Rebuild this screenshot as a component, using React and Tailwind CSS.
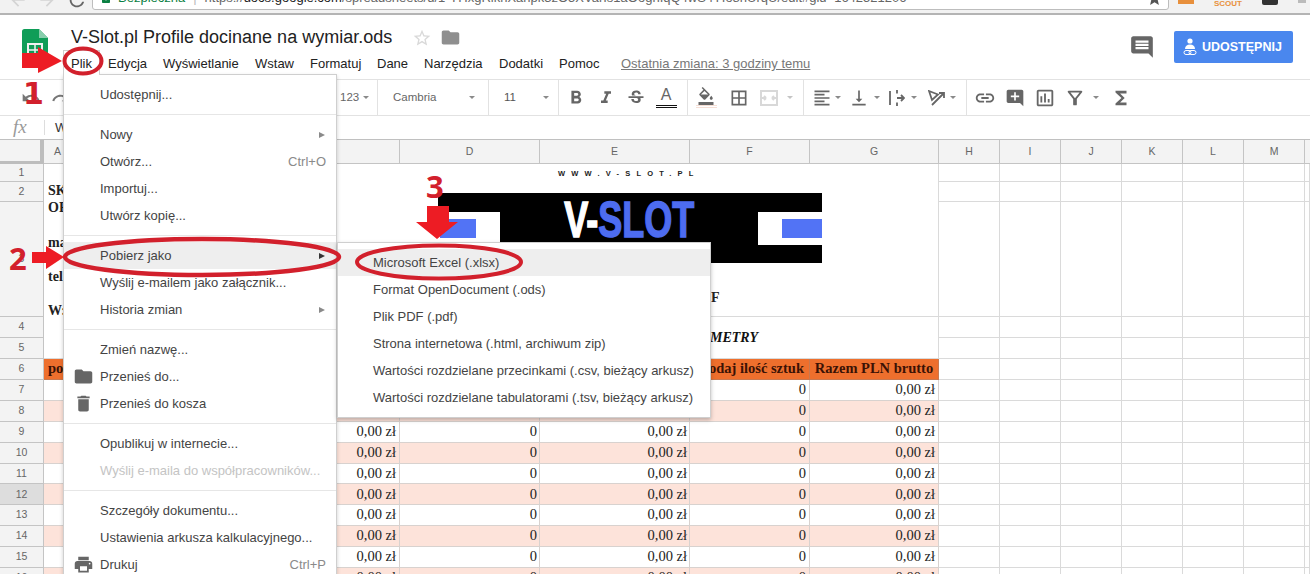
import React from 'react';
import {
  MdComment, MdStarBorder, MdFolder, MdDelete, MdPrint, MdFormatBold, MdFormatItalic, MdStrikethroughS,
  MdFormatColorFill, MdBorderAll, MdFormatAlignLeft, MdVerticalAlignBottom, MdLink, MdAddComment,
  MdOutlineInsertChart, MdOutlineFilterAlt, MdFunctions, MdUndo, MdRedo, MdLock, MdRefresh, MdStar, MdArrowBack, MdArrowForward,
} from 'react-icons/md';

const sansFont = "font-['Liberation_Sans',Arial,sans-serif]";
const serifFont = "font-['Liberation_Serif','Times_New_Roman',serif]";

const fileMenu = [
  { label: 'Udostępnij...' },
  { divider: true },
  { label: 'Nowy', arrow: true },
  { label: 'Otwórz...', hint: 'Ctrl+O' },
  { label: 'Importuj...' },
  { label: 'Utwórz kopię...' },
  { divider: true },
  { label: 'Pobierz jako', arrow: true, active: true },
  { label: 'Wyślij e-mailem jako załącznik...' },
  { label: 'Historia zmian', arrow: true },
  { divider: true },
  { label: 'Zmień nazwę...' },
  { label: 'Przenieś do...', icon: MdFolder },
  { label: 'Przenieś do kosza', icon: MdDelete },
  { divider: true },
  { label: 'Opublikuj w internecie...' },
  { label: 'Wyślij e-maila do współpracowników...', disabled: true },
  { divider: true },
  { label: 'Szczegóły dokumentu...' },
  { label: 'Ustawienia arkusza kalkulacyjnego...' },
  { label: 'Drukuj', icon: MdPrint, hint: 'Ctrl+P' },
];

const downloadMenu = [
  'Microsoft Excel (.xlsx)',
  'Format OpenDocument (.ods)',
  'Plik PDF (.pdf)',
  'Strona internetowa (.html, archiwum zip)',
  'Wartości rozdzielane przecinkami (.csv, bieżący arkusz)',
  'Wartości rozdzielane tabulatorami (.tsv, bieżący arkusz)',
];

const columns = ['D', 'E', 'F', 'G'];
const emptyColumns = ['H', 'I', 'J', 'K', 'L', 'M', ''];
const dataRows = [7, 8, 9, 10, 11, 12, 13, 14, 15, 16];

function Caret({ className = '' }) {
  return <span className={`inline-block w-0 h-0 border-x-[3px] border-x-transparent border-t-[3px] border-t-[#8a8a8a] shrink-0 ${className}`} />;
}

function ToolIcon({ children, className = 'w-[30px]' }) {
  return <div className={`flex items-center justify-center text-[#666] shrink-0 ${className}`}>{children}</div>;
}

function Separator() {
  return <div className="w-px h-full bg-[#e2e2e2] shrink-0" />;
}

function BrowserBar() {
  return (
    <div className="h-[15px] bg-[#f2f2f2] border-b-2 border-[#b4b4b4] flex overflow-hidden shrink-0">
      <div className="w-[92px] shrink-0 flex items-end gap-[9px] pl-[8px] text-[#d4d4d4]">
        <MdArrowBack size={20} className="mb-[3px]" />
        <MdArrowForward size={20} className="mb-[3px]" />
        <MdRefresh size={22} className="mb-[2px] text-[#666]" />
      </div>
      <div className="w-[1077px] h-[24px] -mt-[14px] bg-white border border-[#bdbdbd] rounded-[3px] flex items-center pl-[7px] pr-[5px] text-[13px] whitespace-nowrap overflow-hidden">
        <MdLock size={12} className="text-[#0b8043] mr-[6px] shrink-0" />
        <span className="text-[#0b8043]">Bezpieczna</span>
        <span className="mx-[8px] text-[#bbb]">|</span>
        <span className="text-[#666]">https://</span>
        <span className="text-[#222]">docs.google.com</span>
        <span className="text-[#666] flex-1 overflow-hidden">/spreadsheets/d/1-YHxgRlkhXanpk3zO5XVarIs1aOoghIqQ4wS4YIo8hUrqU/edit#gid=1642521206</span>
        <MdStar size={17} className="text-[#555] shrink-0" />
      </div>
      <div className="flex-1 flex items-start pl-[9px] gap-[20px] text-[8px] leading-[8px]">
        <span className="w-[16px] h-[4px] bg-[#e8903c] mt-0" />
        <span className="text-[#e8903c] font-bold">SCOUT</span>
        <span className="w-[16px] h-[5px] bg-[#333] rounded-b-[2px]" />
        <span className="w-[8px] h-[3px] bg-[#bbb]" />
      </div>
    </div>
  );
}

function SheetsLogo() {
  return (
    <svg width="26" height="36" viewBox="0 0 26 36" className="shrink-0">
      <path d="M2.5 0H17l9 9v24.500a2.500 2.500 0 0 1-2.500 2.500h-21A2.500 2.500 0 0 1 0 33.500v-31A2.500 2.500 0 0 1 2.500 0z" fill="#0f9d58" />
      <path d="M17 0l9 9h-9z" fill="#87ceac" />
      <path d="M6 15h14v12H6z" fill="none" stroke="#f1f1f1" strokeWidth="2" />
      <path d="M6 21h14M13 15v12" stroke="#f1f1f1" strokeWidth="1.500" />
    </svg>
  );
}

function Header() {
  return (
    <div className="h-[64px] flex bg-white shrink-0">
      <div className="w-[71px] shrink-0 pl-[22px] pt-[14px]">
        <SheetsLogo />
      </div>
      <div className="flex-1 pt-[11px]">
        <div className="flex items-center h-[23px]">
          <h1 className="text-[18px] leading-[23px] text-[#222] font-normal whitespace-nowrap">V-Slot.pl Profile docinane na wymiar.ods</h1>
          <MdStarBorder size={20} className="ml-[20px] text-[#d9d9d9]" />
          <MdFolder size={21} className="ml-[8px] text-[#8f8f8f]" />
        </div>
        <div className="flex items-center h-[20px] mt-[5px] text-[13px] text-[#222] whitespace-nowrap">
          <span className="w-[37px]">Plik</span>
          <span className="w-[55px]">Edycja</span>
          <span className="w-[92px]">Wyświetlanie</span>
          <span className="w-[55px]">Wstaw</span>
          <span className="w-[67px]">Formatuj</span>
          <span className="w-[47px]">Dane</span>
          <span className="w-[75px]">Narzędzia</span>
          <span className="w-[60px]">Dodatki</span>
          <span className="w-[62px]">Pomoc</span>
          <span className="text-[#777] underline">Ostatnia zmiana: 3 godziny temu</span>
        </div>
      </div>
      <div className="flex items-start pt-[16px] pr-[17px]">
        <MdComment size={26} className="text-[#666] mt-[3px] mr-[19px]" />
        <button className="w-[119px] h-[32px] bg-[#4a87ee] rounded-[2px] flex items-center pl-[9px] gap-[5px] text-white text-[12.500px] font-bold whitespace-nowrap">
          <svg width="14" height="18" viewBox="0 0 14 18" fill="none">
            <circle cx="7" cy="3" r="2.600" fill="#fff" />
            <path d="M2 11c0-3 2-4.500 5-4.500s5 1.500 5 4.500z" fill="#fff" />
            <rect x="1" y="12.500" width="7" height="4" rx="2" stroke="#fff" />
            <rect x="6" y="12.500" width="7" height="4" rx="2" stroke="#fff" />
          </svg>
          UDOSTĘPNIJ
        </button>
      </div>
    </div>
  );
}

function Toolbar() {
  return (
    <div className="h-[37px] border-y border-[#e2e2e2] flex items-stretch bg-white shrink-0 text-[11.500px] text-[#666]">
      <div className="w-[336px] flex items-center pl-[21px] gap-[4px] text-[#777]">
        <MdUndo size={20} />
        <MdRedo size={20} className="ml-[6px]" />
      </div>
      <div className="w-[41px] flex items-center pl-[4px] gap-[4px]">123 <Caret /></div>
      <Separator />
      <div className="w-[110px] flex items-center pl-[15px] pr-[13px] justify-between">Cambria <Caret /></div>
      <Separator />
      <div className="w-[69px] flex items-center pl-[15px] pr-[9px] justify-between text-[#555]">11 <Caret /></div>
      <Separator />
      <div className="w-[128px] flex items-center pl-[2px]">
        <ToolIcon><MdFormatBold size={22} /></ToolIcon>
        <ToolIcon><MdFormatItalic size={20} /></ToolIcon>
        <ToolIcon><MdStrikethroughS size={20} /></ToolIcon>
        <ToolIcon>
          <div className="flex flex-col items-center">
            <span className="text-[16px] leading-[15px] text-[#666]">A</span>
            <span className="w-[21px] h-[3px] border-y border-[#111] mt-[3px]" />
          </div>
        </ToolIcon>
      </div>
      <Separator />
      <div className="w-[115px] flex items-center pl-[3px]">
        <ToolIcon>
          <div className="flex flex-col items-center">
            <MdFormatColorFill size={18} />
            <span className="w-[21px] h-[3px] border-y border-[#f6dfd6]" />
          </div>
        </ToolIcon>
        <ToolIcon className="w-[30px] ml-[3px]"><MdBorderAll size={20} /></ToolIcon>
        <ToolIcon>
          <svg width="18" height="16" viewBox="0 0 18 16" fill="none" stroke="#d8d8d8" strokeWidth="2">
            <path d="M1 1h16v14H1zM1 8h5M12 8h5M6 8l-2-2M6 8l-2 2M12 8l2-2M12 8l2 2" />
          </svg>
        </ToolIcon>
        <Caret className="ml-[3px] opacity-50" />
      </div>
      <Separator />
      <div className="w-[162px] flex items-center pl-[5px]">
        <ToolIcon className="w-[26px]"><MdFormatAlignLeft size={20} /></ToolIcon>
        <Caret />
        <ToolIcon className="w-[26px] ml-[5px]"><MdVerticalAlignBottom size={20} /></ToolIcon>
        <Caret className="ml-[2px]" />
        <ToolIcon className="w-[28px] ml-[3px]">
          <svg width="16" height="16" viewBox="0 0 16 16" fill="none" stroke="#666" strokeWidth="1.800">
            <path d="M1 1v14M8 0v3.500M8 12.500V16M8 8h7M12 5l3 3-3 3" />
          </svg>
        </ToolIcon>
        <Caret />
        <ToolIcon className="w-[27px] ml-[6px]">
          <svg width="18" height="16" viewBox="0 0 18 16" fill="none" stroke="#666" strokeWidth="1.800">
            <path d="M1 1l9 3.500-6 5.500zM4 15L16 3M11 3h5v5" />
          </svg>
        </ToolIcon>
        <Caret />
      </div>
      <Separator />
      <div className="flex-1 flex items-center pl-[3px]">
        <ToolIcon><MdLink size={22} /></ToolIcon>
        <ToolIcon><MdAddComment size={20} /></ToolIcon>
        <ToolIcon><MdOutlineInsertChart size={22} /></ToolIcon>
        <ToolIcon><MdOutlineFilterAlt size={22} /></ToolIcon>
        <Caret className="ml-[3px]" />
        <ToolIcon className="w-[30px] ml-[7px]"><MdFunctions size={22} /></ToolIcon>
      </div>
    </div>
  );
}

function FormulaBar() {
  return (
    <div className="h-[23px] flex items-center bg-white shrink-0">
      <span className={`w-[44px] pl-[13px] italic text-[19px] text-[#9a9a9a] ${serifFont}`}>fx</span>
      <span className="w-px h-[15px] bg-[#ddd]" />
      <span className="pl-[10px] text-[13px] text-[#333]">W</span>
    </div>
  );
}

function RowHead({ n, selected = false }) {
  return (
    <div className={`${selected ? 'bg-[#dddddd]' : 'bg-[#f3f3f3]'} border-r border-b border-[#c4c4c4] flex items-center justify-center text-[10.500px] text-[#666] ${sansFont}`}>
      {n}
    </div>
  );
}

function EmptyCells() {
  return emptyColumns.map((c, i) => <div key={i} className="border-r border-b border-[#dadada]" />);
}

function Sheet() {
  return (
    <div className={`grid grid-cols-[44px_356px_140px_150px_120px_129px_61px_61px_61px_61px_61px_61px_5px] grid-rows-[24px_18px_20px_115px_21px_21px_21px_repeat(10,20.900px)] border-t border-[#c0c0c0] ${serifFont}`}>
      {/* column headers */}
      <div className="bg-[#f3f3f3] border-r-4 border-b-[3px] border-[#bdbdbd]" />
      <div className={`bg-[#f3f3f3] border-r border-b border-[#c4c4c4] pl-[10px] flex items-center text-[10.500px] text-[#666] ${sansFont}`}>A</div>
      {columns.concat(emptyColumns.slice(0, 6)).map((c) => (
        <div key={c} className={`bg-[#f3f3f3] border-r border-b border-[#c4c4c4] flex items-center justify-center text-[10.500px] text-[#666] ${sansFont}`}>{c}</div>
      ))}
      <div className="bg-[#f3f3f3] border-b border-[#c4c4c4]" />

      {/* row 1 */}
      <RowHead n={1} />
      <div className="row-span-5 border-b border-[#dadada] pl-[4px] pt-[18px] text-[14px] leading-[17.200px] font-bold text-[#222]">
        <p>SK</p>
        <p>OF</p>
        <p>&nbsp;</p>
        <p>ma</p>
        <p>&nbsp;</p>
        <p>tel</p>
        <p>&nbsp;</p>
        <p>W:</p>
      </div>
      <div className="col-span-4 row-span-3 border-r border-b border-[#dadada] flex flex-col items-start">
        <p className={`ml-[158px] pt-[4px] text-[7.500px] leading-[12px] font-bold tracking-[6.200px] text-[#222] whitespace-nowrap ${sansFont}`}>WWW.V-SLOT.PL</p>
        <div className="ml-[38px] mt-[13px] w-[384px] h-[70px] bg-black flex items-center justify-between">
          <div className="w-[62px] h-[33px] bg-white flex items-center">
            <div className="w-[36px] h-[19px] ml-[2px] bg-[#5273f5]" />
          </div>
          <p className={`-mt-[16px] text-[50px] leading-[56px] font-bold scale-x-[0.72] whitespace-nowrap text-white [-webkit-text-stroke:1.5px_currentColor] ${sansFont}`}>
            V-<span className="text-[#4d6cf0]">SLOT</span>
          </p>
          <div className="w-[64px] h-[33px] bg-white flex items-center justify-end">
            <div className="w-[40px] h-[19px] bg-[#5273f5]" />
          </div>
        </div>
        <p className="ml-[311px] mt-[24px] text-[14px] font-bold text-[#222]">F</p>
      </div>
      <EmptyCells />

      {/* row 2 */}
      <RowHead n={2} />
      <EmptyCells />

      {/* row 3 */}
      <RowHead n={3} />
      <EmptyCells />

      {/* row 4 and 5 */}
      <RowHead n={4} />
      <div className="col-span-4 row-span-2 border-r border-b border-[#dadada] pl-[310px] flex items-center text-[14px] italic font-bold text-[#111]">METRY</div>
      <EmptyCells />
      <RowHead n={5} />
      <EmptyCells />

      {/* row 6 */}
      <RowHead n={6} />
      <div className="bg-[#ee6f2d] border-r border-b border-[#c9784f] pl-[4px] flex items-center text-[14.500px] font-bold text-[#3b1205]">po</div>
      <div className="bg-[#ee6f2d] border-r border-b border-[#c9784f]" />
      <div className="bg-[#ee6f2d] border-r border-b border-[#c9784f]" />
      <div className="bg-[#ee6f2d] border-r border-b border-[#c9784f] pr-[5px] flex items-center justify-end text-[14.500px] font-bold text-[#3b1205] whitespace-nowrap">Podaj ilość sztuk</div>
      <div className="bg-[#ee6f2d] border-r border-b border-[#c9784f] flex items-center justify-center text-[14.500px] font-bold text-[#3b1205] whitespace-nowrap">Razem PLN brutto</div>
      <EmptyCells />

      {/* data rows */}
      {dataRows.map((n) => {
        const tint = n % 2 === 0 ? 'bg-[#fde3da]' : 'bg-white';
        const cell = `${tint} border-r border-b border-[#d8d2cf] flex items-center justify-end text-[14.500px] text-[#222]`;
        return (
          <React.Fragment key={n}>
            <RowHead n={n} selected={n === 12} />
            <div className={`${cell} pr-[3px]`}>0,00 zł</div>
            <div className={`${cell} pr-[2px]`}>0</div>
            <div className={`${cell} pr-[2px]`}>0,00 zł</div>
            <div className={`${cell} pr-[3px]`}>0</div>
            <div className={`${cell} pr-[3px]`}>0,00 zł</div>
            <EmptyCells />
          </React.Fragment>
        );
      })}
    </div>
  );
}

function FileMenu() {
  return (
    <div className="absolute left-[63px] top-[74px] w-[274px] bg-white border border-[#cfcfcf] shadow-[0_2px_4px_rgba(0,0,0,0.2)] pt-[6px] text-[13px] text-[#444]">
      {fileMenu.map((item, i) => {
        if (item.divider) {
          return <div key={i} className="h-[13px] flex items-center"><div className="w-full h-px bg-[#e6e6e6]" /></div>;
        }
        const Icon = item.icon;
        return (
          <div key={i} className={`h-[27px] flex items-center pr-[10px] whitespace-nowrap ${item.active ? 'bg-[#eeeeee]' : ''} ${item.disabled ? 'text-[#c4c4c4]' : ''}`}>
            <div className="w-[36px] flex justify-center shrink-0 pl-[2px]">
              {Icon && <Icon size={21} className="text-[#666]" />}
            </div>
            <span className="flex-1 pt-px">{item.label}</span>
            {item.hint && <span className="text-[#8a8a8a] pt-px">{item.hint}</span>}
            {item.arrow && (
              <span className={`w-0 h-0 mr-[1px] border-y-[3.500px] border-y-transparent border-l-[6px] ${item.active ? 'border-l-[#333]' : 'border-l-[#8a8a8a]'}`} />
            )}
          </div>
        );
      })}
    </div>
  );
}

function DownloadMenu() {
  return (
    <div className="absolute left-[337px] top-[242px] w-[374px] bg-white border border-[#cfcfcf] shadow-[0_2px_4px_rgba(0,0,0,0.25)] py-[6px] text-[13px] text-[#444]">
      {downloadMenu.map((label, i) => (
        <div key={label} className={`h-[27px] flex items-center pl-[35px] pt-px whitespace-nowrap ${i === 0 ? 'bg-[#eeeeee]' : ''}`}>{label}</div>
      ))}
    </div>
  );
}

function Annotations() {
  return (
    <>
      <svg className="absolute left-0 top-0 pointer-events-none" width="1310" height="574" fill="none">
        <polygon points="22,53 38,53 38,47 62,61 38,73 38,68 22,68" fill="#ed1c24" />
        <polygon points="32,252 46,252 46,246 64,257 46,269 46,263 32,263" fill="#ed1c24" />
        <polygon points="427,206 449,206 449,222 458,222 437,239 416,222 427,222" fill="#ed1c24" />
        <ellipse cx="83" cy="61" rx="18.500" ry="12.500" stroke="#d2202c" strokeWidth="4" />
        <ellipse cx="202" cy="257" rx="137" ry="18" stroke="#d2202c" strokeWidth="4.500" />
        <ellipse cx="439" cy="262" rx="82" ry="16.500" stroke="#d2202c" strokeWidth="4" />
      </svg>
      <span className="absolute left-[23px] top-[75px] text-[30px] leading-[38px] font-bold text-[#d2202c] font-['DejaVu_Sans',sans-serif]">1</span>
      <span className="absolute left-[9px] top-[239px] text-[31px] leading-[38px] font-bold text-[#d2202c] font-['Open_Sans',sans-serif]">2</span>
      <span className="absolute left-[426px] top-[167px] text-[31px] leading-[38px] font-bold text-[#d2202c] font-['Open_Sans',sans-serif]">3</span>
    </>
  );
}

export default function App() {
  return (
    <div className={`relative w-[1310px] h-[574px] overflow-hidden bg-white flex flex-col ${sansFont}`}>
      <BrowserBar />
      <Header />
      <Toolbar />
      <FormulaBar />
      <Sheet />
      {/* Plik tab sits above the open menu */}
      <div className="absolute left-[63px] top-[50px] w-[37px] h-[25px] bg-white border border-b-0 border-[#cfcfcf] z-10 pl-[7px] pt-[3px] text-[13px] text-[#222]">Plik</div>
      <FileMenu />
      <DownloadMenu />
      <div className="absolute inset-0 z-20 pointer-events-none">
        <Annotations />
      </div>
    </div>
  );
}
